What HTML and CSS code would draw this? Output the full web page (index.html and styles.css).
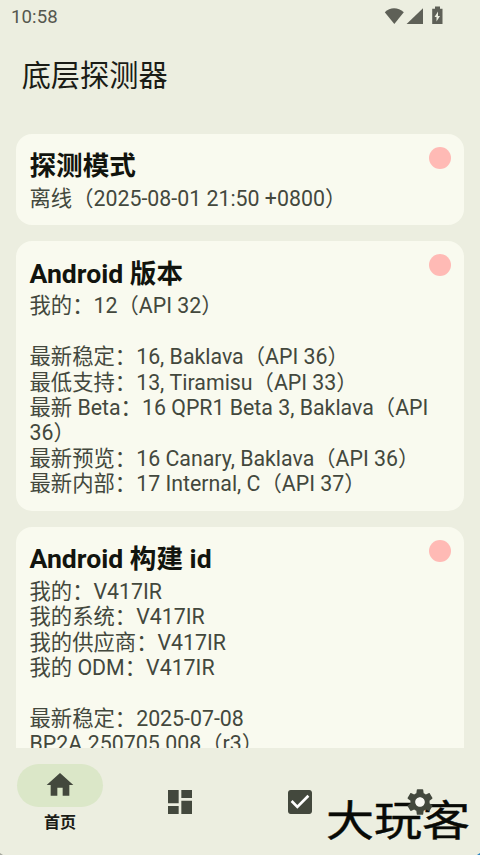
FILE: index.html
```html
<!DOCTYPE html>
<html lang="zh-CN">
<head>
<meta charset="utf-8">
<title>底层探测器</title>
<link rel="stylesheet" href="styles.css">
</head>
<body>
<div class="app">
  <header class="status">
    <span class="clock">10:58</span>
    <svg class="status-icons" width="60" height="20" viewBox="0 0 60 20" fill="#5e6057">
      <path d="M.8 4.200C6-1 14-1 19.800 4.200L10.300 16z"/>
      <path d="M22.600 16H39V.2z"/>
      <path fill-rule="evenodd" d="M51-1.500h5V.7H58.500V16H48.200V.7H51zM54 3.500l-3.500 5.500h2v4.500L56 8h-2z"/>
    </svg>
  </header>
  <h1 class="title">底层探测器</h1>
  <main class="list">
    <section class="card">
      <span class="dot"></span>
      <h2>探测模式</h2>
      <p>离线（2025-08-01 21:50 +0800）</p>
    </section>
    <section class="card">
      <span class="dot"></span>
      <h2>Android 版本</h2>
      <p>我的：12（API 32）</p>
      <p class="group">最新稳定：16, Baklava（API 36）</p>
      <p>最低支持：13, Tiramisu（API 33）</p>
      <p>最新 Beta：16 QPR1 Beta 3, Baklava（API 36）</p>
      <p>最新预览：16 Canary, Baklava（API 36）</p>
      <p>最新内部：17 Internal, C（API 37）</p>
    </section>
    <section class="card">
      <span class="dot"></span>
      <h2>Android 构建 id</h2>
      <p>我的：V417IR</p>
      <p>我的系统：V417IR</p>
      <p>我的供应商：V417IR</p>
      <p>我的 ODM：V417IR</p>
      <p class="group">最新稳定：2025-07-08</p>
      <p>BP2A.250705.008（r3）</p>
    </section>
  </main>
  <nav class="nav">
    <a class="item active">
      <span class="pill"><svg viewBox="0 0 24 24"><path d="M10 20v-6h4v6h5v-8h3L12 3 2 12h3v8z"/></svg></span>
      <span class="label">首页</span>
    </a>
    <a class="item"><svg viewBox="0 0 24 24"><path d="M3 13h8V3H3v10zm0 8h8v-6H3v6zm10 0h8V11h-8v10zm0-18v6h8V3h-8z"/></svg></a>
    <a class="item"><svg viewBox="0 0 24 24"><rect x="4" y="4" width="16" height="16" fill="#fff"/><path d="M19 3H5c-1.110 0-2 .9-2 2v14c0 1.100.89 2 2 2h14c1.110 0 2-.9 2-2V5c0-1.100-.89-2-2-2zm-9 14l-5-5 1.410-1.410L10 14.170l7.590-7.590L19 8l-9 9z"/></svg></a>
    <a class="item settings"><svg viewBox="0 0 24 24"><circle cx="12" cy="12" r="4" fill="#f8f8f2"/><path d="M19.140 12.940c.04-.3.060-.61.060-.94 0-.32-.02-.64-.07-.94l2.030-1.580c.18-.14.230-.41.120-.61l-1.920-3.320c-.12-.22-.37-.29-.59-.22l-2.390.96c-.5-.38-1.030-.7-1.620-.94l-.36-2.540c-.04-.24-.24-.41-.48-.41h-3.840c-.24 0-.43.170-.47.410l-.36 2.540c-.59.240-1.130.57-1.620.94l-2.390-.96c-.22-.08-.47 0-.59.220L2.740 8.870c-.12.210-.08.470.12.610l2.030 1.580c-.05.300-.09.630-.09.940s.02.640.07.940l-2.030 1.580c-.18.140-.23.410-.12.610l1.920 3.320c.12.220.37.290.59.220l2.390-.96c.5.380 1.030.7 1.620.94l.36 2.540c.05.240.24.410.48.410h3.840c.24 0 .44-.17.470-.41l.36-2.540c.59-.24 1.130-.56 1.620-.94l2.390.96c.22.080.47 0 .59-.22l1.920-3.320c.12-.22.070-.47-.12-.61l-2.010-1.580zM12 15.600c-1.980 0-3.600-1.620-3.600-3.600s1.620-3.600 3.600-3.600 3.600 1.620 3.600 3.600-1.620 3.600-3.600 3.600z"/></svg></a>
  </nav>
  <div class="mark">大玩客</div>
  <span class="corner left"></span>
  <span class="corner right"></span>
</div>
</body>
</html>
```
FILE: styles.css
```css
* { box-sizing: border-box; margin: 0; padding: 0; }
body {
  background: #eceee0;
  color: #43483d;
  font-family: Roboto, "Noto Sans CJK SC", sans-serif;
  text-spacing-trim: space-all;
}
.app {
  position: relative;
  display: flex;
  flex-direction: column;
  width: 480px;
  height: 855px;
  overflow: hidden;
}
.status {
  display: flex;
  justify-content: space-between;
  flex: none;
  height: 48px;
  padding: 8px 36px 0 11px;
}
.clock { font-size: 18.6px; line-height: 18px; font-weight: 400; color: #55574e; letter-spacing: 0.1px; }
.status-icons { overflow: visible; }
.title {
  flex: none;
  height: 85.7px;
  padding-left: 21.7px;
  font-size: 29.2px;
  line-height: 57px;
  font-weight: 400;
  color: #1a1c16;
}
.list {
  display: flex;
  flex-direction: column;
  gap: 16px;
  flex: none;
  height: 614.3px;
  padding: 0 16px;
  overflow: hidden;
}
.card {
  position: relative;
  flex: none;
  padding: 13.2px 21px 14.3px 13.5px;
  border-radius: 16px;
  background: #f9faef;
}
.card h2 { margin-bottom: 0.8px; font-size: 26.6px; line-height: 38px; font-weight: 700; color: #12140e; }
.card p { font-size: 21.33px; line-height: 25.4px; }
.card .group { margin-top: 25.4px; }
.dot {
  position: absolute;
  top: 13px;
  right: 13px;
  width: 22px;
  height: 22px;
  border-radius: 50%;
  background: #ffbab5;
}
.nav { display: flex; flex: none; height: 107px; }
.item { display: flex; flex: 1; align-items: center; justify-content: center; padding-top: 1px; }
.item svg { width: 32px; height: 32px; fill: #43483d; }
.settings { position: relative; z-index: 1; }
.active { flex-direction: column; justify-content: flex-start; padding-top: 16px; }
.pill {
  display: flex;
  align-items: center;
  justify-content: center;
  width: 86px;
  height: 43px;
  border-radius: 22px;
  background: #dbe7c8;
}
.label { margin-top: 5px; font-size: 16px; line-height: 22px; font-weight: 700; color: #1a1c16; }
.mark {
  position: absolute;
  left: 326px;
  top: 790px;
  color: #080a06;
  font: 400 48px/56px "Noto Sans CJK SC", sans-serif;
  -webkit-text-stroke: 0.5px #080a06;
  transform: scaleY(0.87);
}
.corner { position: absolute; bottom: 0; width: 3px; height: 2px; }
.left { left: 0; background: #a6a89e; clip-path: polygon(0 0, 100% 100%, 0 100%); }
.right { right: 0; background: #2a83c4; clip-path: polygon(100% 0, 100% 100%, 0 100%); }
```
